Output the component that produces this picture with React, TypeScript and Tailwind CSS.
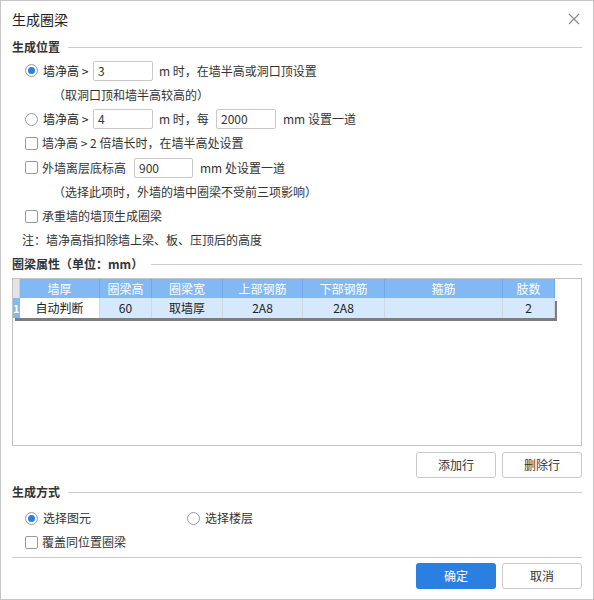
import React from "react";

const COLS = [
  { label: "墙厚", w: "w-[80px]", v: "自动判断", white: true },
  { label: "圈梁高", w: "w-[52px]", v: "60" },
  { label: "圈梁宽", w: "w-[71px]", v: "取墙厚" },
  { label: "上部钢筋", w: "w-[80px]", v: "2A8" },
  { label: "下部钢筋", w: "w-[82px]", v: "2A8" },
  { label: "箍筋", w: "w-[118px]", v: "" },
  { label: "肢数", w: "w-[52px]", v: "2" },
];

function Radio({ checked }: { checked?: boolean }) {
  return (
    <span className="w-[13px] h-[13px] rounded-full border border-[#9a9a9a] bg-white flex items-center justify-center shrink-0">
      {checked && <span className="w-[7px] h-[7px] rounded-full bg-[#2b7fe0]" />}
    </span>
  );
}

function Check() {
  return <span className="w-[13px] h-[13px] rounded-[2px] border border-[#9a9a9a] bg-white shrink-0" />;
}

function Input({ value, w }: { value: string; w: string }) {
  return (
    <div className={`${w} h-[20px] border border-[#c9c9c9] rounded-[2px] bg-white flex items-center pl-[4px] shrink-0`}>
      {value}
    </div>
  );
}

function Section({ title, h }: { title: React.ReactNode; h: string }) {
  return (
    <div className={`${h} flex items-center gap-[8px] pr-[11px] shrink-0`}>
      <span className="font-bold whitespace-nowrap">{title}</span>
      <div className="flex-1 h-px bg-[#cccccc]" />
    </div>
  );
}

function Btn({ children, primary }: { children: React.ReactNode; primary?: boolean }) {
  return (
    <button
      className={`w-[80px] h-[26px] rounded-[3px] flex items-center justify-center ${
        primary ? "bg-[#2b7fe0] text-white" : "border border-[#c9c9c9] bg-white text-[#333]"
      }`}
    >
      {children}
    </button>
  );
}

export default function App() {
  return (
    <div
      className="w-[594px] h-[600px] border border-[#c6c6c6] bg-white text-[12px] leading-[16px] text-[#333] flex flex-col pl-[11px]"
      style={{ fontFamily: '"Microsoft YaHei", "Noto Sans CJK SC", sans-serif' }}
    >
      {/* Title bar */}
      <div className="h-[36px] flex items-center justify-between pr-[12px] shrink-0">
        <span className="text-[14px] text-[#222]">生成圈梁</span>
        <svg width="12" height="12" viewBox="0 0 12 12" className="mr-[1px]">
          <path d="M1 1L11 11M11 1L1 11" stroke="#888" strokeWidth="1.1" />
        </svg>
      </div>

      <Section title="生成位置" h="h-[20px]" />

      <div className="pl-[13px] flex flex-col">
        <div className="h-[26px] flex items-center pt-[1px]">
          <Radio checked />
          <span className="w-[55px] pl-[5px] text-[#222]">墙净高 &gt;</span>
          <Input value="3" w="w-[60px]" />
          <span className="pl-[6px]">m 时，在墙半高或洞口顶设置</span>
        </div>
        <div className="h-[24px] flex items-center pl-[28px]">（取洞口顶和墙半高较高的）</div>
        <div className="h-[24px] flex items-center">
          <Radio />
          <span className="w-[55px] pl-[5px] text-[#222]">墙净高 &gt;</span>
          <Input value="4" w="w-[60px]" />
          <span className="w-[63px] pl-[6px]">m 时，每</span>
          <Input value="2000" w="w-[60px]" />
          <span className="pl-[7px]">mm 设置一道</span>
        </div>
        <div className="h-[24px] flex items-center">
          <Check />
          <span className="pl-[4px]">墙净高 &gt; 2 倍墙长时，在墙半高处设置</span>
        </div>
        <div className="h-[25px] flex items-center">
          <Check />
          <span className="w-[96px] pl-[4px]">外墙离层底标高</span>
          <Input value="900" w="w-[59px]" />
          <span className="pl-[7px]">mm 处设置一道</span>
        </div>
        <div className="h-[24px] flex items-center pl-[28px]">（选择此项时，外墙的墙中圈梁不受前三项影响）</div>
        <div className="h-[24px] flex items-center">
          <Check />
          <span className="pl-[4px]">承重墙的墙顶生成圈梁</span>
        </div>
        <div className="h-[24px] flex items-center -ml-[3px]">注：墙净高指扣除墙上梁、板、压顶后的高度</div>
      </div>

      <Section title="圈梁属性（单位：mm）" h="h-[24px]" />

      {/* Table */}
      <div className="mt-[2px] w-[570px] h-[168px] border border-[#c3c3c3] bg-white shrink-0">
        <div className="flex h-[19px] text-white">
          <div className="w-[7px] bg-[#e4e4e4] border-r border-[#d0d0d0]" />
          {COLS.map((c) => (
            <div
              key={c.label}
              className={`${c.w} bg-[#82b8f3] border-r border-[#6ea8ea] flex items-center justify-center`}
            >
              {c.label}
            </div>
          ))}
        </div>
        <div className="flex h-[20px] w-[542px] shadow-[2px_3px_0_#7d7d7d]">
          <div className="w-[7px] bg-[#82b8f3] text-white font-bold text-[11px] flex items-center overflow-hidden">
            1
          </div>
          {COLS.map((c) => (
            <div
              key={c.label}
              className={`${c.w} ${c.white ? "bg-white" : "bg-[#d6e9fc]"} border-r border-[#cfd8e2] flex items-center justify-center text-[#222]`}
            >
              {c.v}
            </div>
          ))}
        </div>
      </div>

      <div className="mt-[6px] flex justify-end gap-[6px] pr-[11px] shrink-0">
        <Btn>添加行</Btn>
        <Btn>删除行</Btn>
      </div>

      <div className="mt-[4px]">
        <Section title="生成方式" h="h-[20px]" />
      </div>
      <div className="pl-[13px] flex flex-col">
        <div className="h-[30px] flex items-center pt-[2px]">
          <div className="w-[162px] flex items-center">
            <Radio checked />
            <span className="pl-[5px]">选择图元</span>
          </div>
          <Radio />
          <span className="pl-[5px]">选择楼层</span>
        </div>
        <div className="h-[20px] flex items-center">
          <Check />
          <span className="pl-[4px]">覆盖同位置圈梁</span>
        </div>
      </div>

      <div className="mt-[5px] mr-[11px] h-px bg-[#cccccc] shrink-0" />

      <div className="mt-[5px] flex justify-end gap-[6px] pr-[11px] shrink-0">
        <Btn primary>确定</Btn>
        <Btn>取消</Btn>
      </div>
    </div>
  );
}
